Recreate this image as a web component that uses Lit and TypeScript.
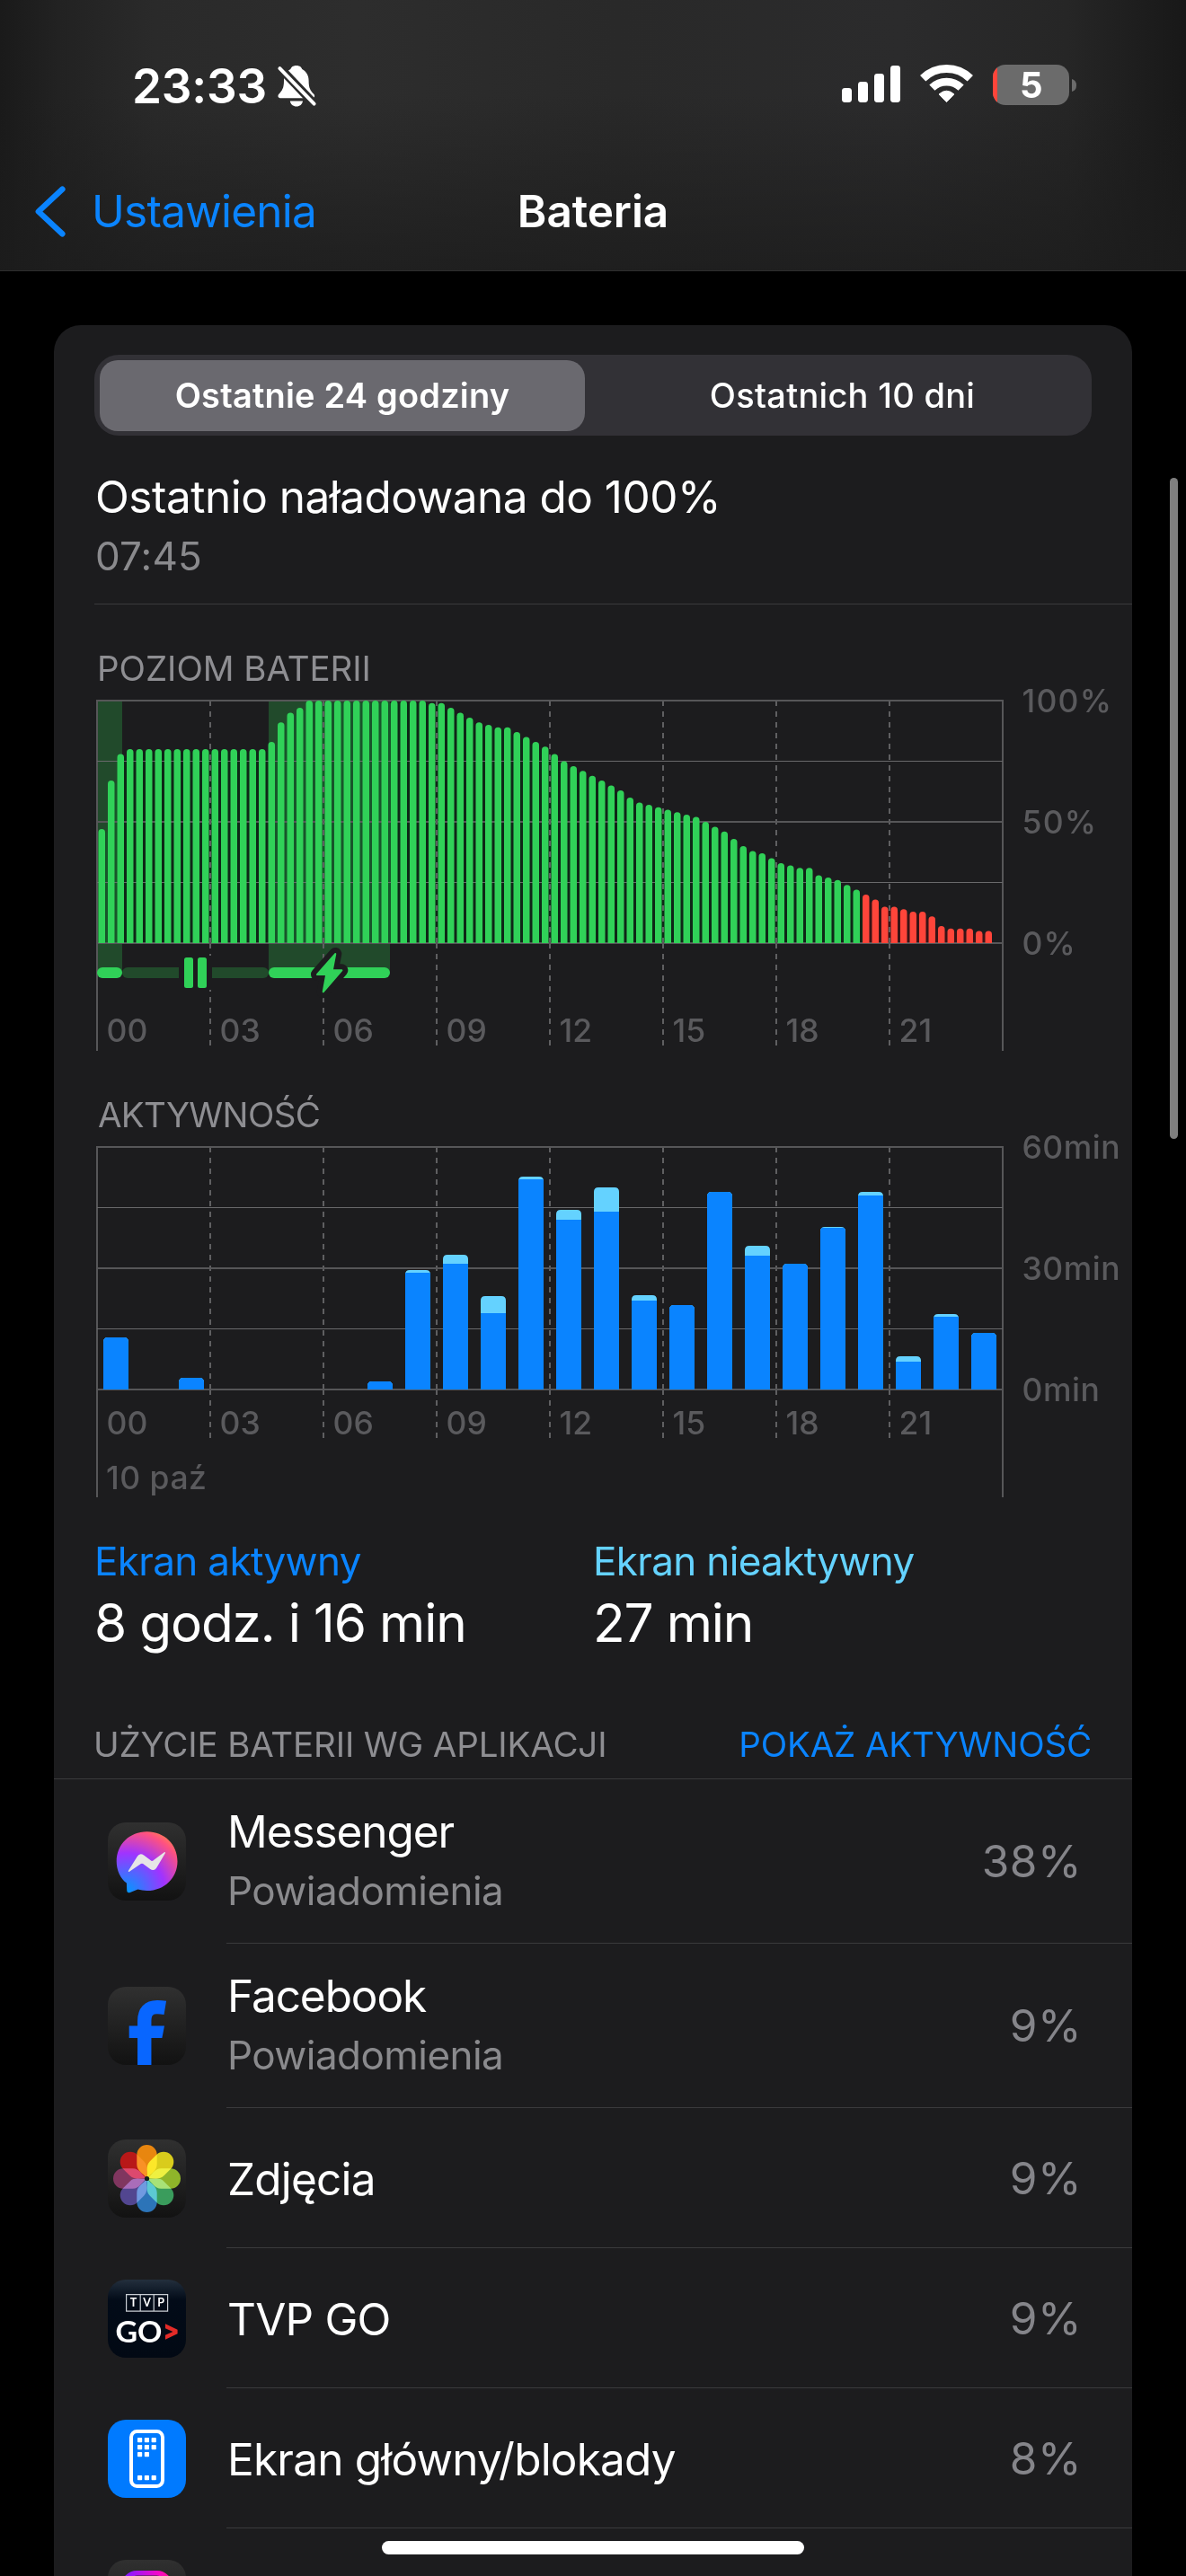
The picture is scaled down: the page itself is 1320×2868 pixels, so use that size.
import { LitElement, html, svg, css, nothing } from "lit";
import { customElement, property } from "lit/decorators.js";

const INK = css`
  :host { font-family: Inter, "Liberation Sans", sans-serif; color: #fff; }
  svg { display: block; overflow: visible; }
`;

/* ---------- data ---------- */

// Battery charge in percent, one sample every 15 minutes from 00:00.
const LEVELS: number[] = [
  47, 67, 78, ...Array(15).fill(80), 83, 91, 95, 97, ...Array(13).fill(100),
  99, 99, 97, 95, 93, 91, 90, 89, 89, 87, 85, 83, 81, 78, 75, 73, 71, 69, 67,
  65, 63, 60, 58, 57, 56, 55, 54, 53, 52, 50, 48, 46, 43, 40, 38, 37, 35, 33,
  32, 31, 31, 28, 27, 26, 24, 22, 20, 18, 15, 15, 14, 13, 13, 11, 7, 6, 6, 6, 5, 5,
];
const FIRST_LOW = 81;
const CHARGING: [number, number][] = [[108, 136], [299, 434]];

// [hour, total height, screen-on height] in chart units (270 = 60 min).
const ACTIVITY: [number, number, number][] = [
  [0, 58, 58], [2, 13, 13], [7, 9, 9], [8, 133, 130], [9, 150, 140],
  [10, 104, 85], [11, 237, 234], [12, 200, 189], [13, 225, 198],
  [14, 105, 99], [15, 94, 94], [16, 220, 220], [17, 160, 149],
  [18, 140, 140], [19, 181, 180], [20, 220, 216], [21, 37, 31],
  [22, 84, 81], [23, 63, 63],
];

const HOURS = ["00", "03", "06", "09", "12", "15", "18", "21"];

interface AppUsage { icon: string; name: string; note?: string; share: string; }
const APPS: AppUsage[] = [
  { icon: "messenger", name: "Messenger", note: "Powiadomienia", share: "38%" },
  { icon: "facebook", name: "Facebook", note: "Powiadomienia", share: "9%" },
  { icon: "photos", name: "Zdjęcia", share: "9%" },
  { icon: "tvp", name: "TVP GO", share: "9%" },
  { icon: "home", name: "Ekran główny/blokady", share: "8%" },
  { icon: "instagram", name: "", share: "" },
];

/* ---------- status bar ---------- */

@customElement("status-bar")
class StatusBar extends LitElement {
  static styles = [INK, css`
    :host { display: flex; align-items: center; height: 192px; padding: 0 122px 0 147px; box-sizing: border-box; }
    .time { font-size: 53px; font-weight: 600; letter-spacing: -0.22px; line-height: 64px; width: 162px; }
    .icons { display: flex; gap: 23px; margin-left: auto; }
    .count { font: 700 40px Inter, sans-serif; }
  `];
  render() {
    return html`
      <span class="time">23:33</span>
      <svg width="43" height="46" viewBox="0 0 43 46" fill="#fff">
        <mask id="cut"><rect width="43" height="46" fill="#fff"/><path d="M-2 -2.2L45 47.2" stroke="#000" stroke-width="9.5"/></mask>
        <g mask="url(#cut)">
          <path d="M20.8 0C25 0 26.7 2.3 27.2 4C32 6.5 34.6 11 34.6 17C34.6 25 36.5 27.8 40 31.5C42.2 33.8 41 36.3 38 36.3H3.5C.6 36.3 -.6 33.8 1.6 31.5C5 27.8 7 25 7 17C7 11 9.6 6.5 14.4 4C14.9 2.3 16.6 0 20.8 0Z"/>
          <path d="M13.8 39.6H28C27.4 43.3 24.6 45.6 20.9 45.6S14.4 43.3 13.8 39.6Z"/>
        </g>
        <path d="M2.4 3.2L40.6 42.6" stroke="#fff" stroke-width="4" stroke-linecap="round"/>
      </svg>
      <div class="icons">
        <svg width="65" height="46" viewBox="0 0 65 46" fill="#fff">
          <rect y="26" width="11" height="16" rx="3.4"/><rect x="18" y="19" width="11" height="23" rx="3.4"/>
          <rect x="36" y="10" width="11" height="32" rx="3.4"/><rect x="54" y="1" width="11" height="41" rx="3.4"/>
        </svg>
        <svg width="57" height="46" viewBox="0 0 57 46" fill="none" stroke="#fff">
          <path d="M2.2 15.3A37.5 37.5 0 0 1 54.8 15.3" stroke-width="9"/>
          <path d="M12.4 25.6A23 23 0 0 1 44.6 25.6" stroke-width="8.8"/>
          <path d="M20 33Q28.5 25.4 37 33L28.5 41.6Z" fill="#fff" stroke-width="1" stroke-linejoin="round"/>
        </svg>
        <svg width="93" height="48" viewBox="0 0 93 48">
          <clipPath id="cell"><rect width="85" height="45" rx="14"/></clipPath>
          <g clip-path="url(#cell)"><rect width="85" height="45" fill="#6b6b6b"/><rect width="5" height="45" fill="#ff453a"/></g>
          <path d="M88 16Q93 17.5 93 23T88 30Z" fill="#6b6b6b"/>
          <text class="count" x="42.8" y="37.4" text-anchor="middle" fill="#fff">5</text>
        </svg>
      </div>`;
  }
}

/* ---------- charts ---------- */

const BASE1 = 1050;
const BASE2 = 1547;

const CHART = css`
  .tick { font: 500 35.5px Inter, sans-serif; fill: #5a5a5d; }
  .pct { letter-spacing: 1.2px; }
  .min { letter-spacing: 0.5px; }
  .major { stroke: #565658; stroke-width: 2; fill: none; }
  .minor { stroke: #69696b; stroke-width: 1; fill: none; }
  .dash { stroke: #5f5f61; stroke-width: 2; stroke-dasharray: 6 6; fill: none; }
`;

const grid = (top: number, dashEnd: number, axisEnd: number) => {
  const base = top + 270;
  const cols = [1, 2, 3, 4, 5, 6, 7].map((i) => 108 + i * 126);
  return svg`
    ${cols.map((x) => svg`<path class="dash" d="M${x} ${top}V${base - 1}M${x} ${base}V${dashEnd}"/>`)}
    <path class="major" d="M107 ${top}H1117M107 ${top + 135}H1117M107 ${base}H1117M108 ${top}V${axisEnd}M1116 ${top}V${axisEnd}"/>
    <path class="minor" d="M108 ${top + 67.5}H1116M108 ${top + 202.5}H1116"/>`;
};

@customElement("level-chart")
class LevelChart extends LitElement {
  static styles = [INK, CHART, css`:host { display: block; }`];

  private gap(i: number) {
    const next = LEVELS[i + 1];
    if (next === undefined) return nothing;
    const x = 108 + i * 10.5 + 9;
    const h = Math.min(LEVELS[i], next) * 2.7;
    const charging = CHARGING.some(([a, b]) => x >= a - 1 && x < b);
    const fill = i >= FIRST_LOW ? "#3b1315" : charging ? "#17552a" : "#0e2717";
    return svg`<rect x=${x} y=${BASE1 - h + 3} width="3" height=${h - 3} fill=${fill} />`;
  }

  private bar(level: number, i: number) {
    const x = 108 + i * 10.5 + 1.5;
    const top = BASE1 - level * 2.7;
    return svg`<path d="M${x} ${BASE1}V${top + 3.75}a3.75 3.75 0 0 1 7.5 0V${BASE1}Z" fill=${i >= FIRST_LOW ? "#ff453a" : "#30d158"} />`;
  }

  render() {
    return html`<svg width="1200" height="405" viewBox="60 767 1200 405">
      ${CHARGING.map(([a, b]) => svg`<rect x=${a} y="780" width=${b - a} height="303" fill="#214a2b"/>`)}
      ${LEVELS.map((_, i) => this.gap(i))}
      ${grid(780, 1164, 1170)}
      ${LEVELS.map((l, i) => this.bar(l, i))}
      <rect x="108" y="1077" width="28" height="12" rx="6" fill="#30d158"/>
      <rect x="136" y="1077" width="163" height="12" rx="6" fill="#214a2b"/>
      <rect x="199" y="1064" width="37" height="38" fill="#1c1c1e"/>
      <rect x="205" y="1066" width="10" height="34" rx="2.5" fill="#30d158"/>
      <rect x="220" y="1066" width="10" height="34" rx="2.5" fill="#30d158"/>
      <rect x="299" y="1077" width="135" height="12" rx="6" fill="#30d158"/>
      <path d="M373.3 1062L353 1085H363.2L359.7 1104.3L380.4 1080.3H369.8Z" fill="#30d158" stroke="#1c1c1e" stroke-width="14" stroke-linejoin="round"/>
      <path d="M373.3 1062L353 1085H363.2L359.7 1104.3L380.4 1080.3H369.8Z" fill="#30d158" stroke="#30d158" stroke-width="2" stroke-linejoin="round"/>
      ${HOURS.map((h, i) => svg`<text class="tick" x=${118.5 + i * 126} y="1160">${h}</text>`)}
      <text class="tick pct" x="1137.5" y="793">100%</text>
      <text class="tick pct" x="1137.5" y="928">50%</text>
      <text class="tick pct" x="1137.5" y="1063">0%</text>
    </svg>`;
  }
}

@customElement("activity-chart")
class ActivityChart extends LitElement {
  static styles = [INK, CHART, css`:host { display: block; }`];

  private bar([hour, total, on]: [number, number, number]) {
    const x = 108 + hour * 42 + 7;
    const top = BASE2 - total;
    const shape = `M${x} ${BASE2}V${top + 5}q0 -5 5 -5h18q5 0 5 5V${BASE2}Z`;
    return svg`
      <clipPath id=${"h" + hour}><path d=${shape} /></clipPath>
      <g clip-path=${`url(#h${hour})`}>
        <rect x=${x} y=${top} width="28" height=${total} fill="#64d2ff" />
        <rect x=${x} y=${BASE2 - on} width="28" height=${on} fill="#0a84ff" />
      </g>`;
  }

  render() {
    return html`<svg width="1200" height="405" viewBox="60 1264 1200 405">
      ${grid(1277, 1601, 1667)}
      ${ACTIVITY.map((a) => this.bar(a))}
      ${HOURS.map((h, i) => svg`<text class="tick" x=${118.5 + i * 126} y="1597">${h}</text>`)}
      <text class="tick min" x="118" y="1658">10 paź</text>
      <text class="tick min" x="1137.5" y="1290">60min</text>
      <text class="tick min" x="1137.5" y="1425">30min</text>
      <text class="tick min" x="1137.5" y="1560">0min</text>
    </svg>`;
  }
}

/* ---------- app icons ---------- */

const PETALS: [number, string][] = [
  [0, "#e8860f"], [45, "#d9cc1c"], [90, "#8fb52a"], [135, "#3a9c5c"],
  [180, "#2c74b8"], [225, "#524690"], [270, "#80365f"], [315, "#b81818"],
];
const DOTS = [[33, 20], [40.8, 20], [48.6, 20], [33, 28], [40.8, 28], [48.6, 28], [33, 36], [40.8, 36], [33, 62], [40.8, 62], [48.6, 62]];

@customElement("app-icon")
class AppIcon extends LitElement {
  static styles = [INK, css`
    :host { display: block; width: 87px; height: 87px; border-radius: 20px; overflow: hidden; flex: none;
      background: linear-gradient(#303030, #121212); }
    :host([name="tvp"]) { background: linear-gradient(#232f3d, #020b18 26%, #020914); }
    :host([name="home"]) { background: #007aff; }
    .petals { isolation: isolate; }
    .petal { mix-blend-mode: screen; }
    .tvp { font: 700 12.5px Lato, sans-serif; }
    .go { font: 700 33px Lato, sans-serif; }
  `];
  @property({ reflect: true }) name = "";

  private art() {
    switch (this.name) {
      case "messenger": return svg`
        <radialGradient id="m" gradientUnits="userSpaceOnUse" cx="21" cy="77" r="74">
          <stop offset="0" stop-color="#0099ff"/><stop offset=".58" stop-color="#a033ff"/>
          <stop offset=".92" stop-color="#ff5280"/><stop offset="1" stop-color="#ff7061"/>
        </radialGradient>
        <path fill="url(#m)" d="M43.6 10.3C63 10.3 77.5 24.6 77.5 43.2S63 76 43.6 76C40 76 36.6 75.5 33.4 74.6L24.8 77.9C22.6 78.7 21.2 77.8 21.2 75.6L20.9 67.6C13.9 62 9.7 53.3 9.7 43.2C9.7 24.6 24.2 10.3 43.6 10.3Z"/>
        <path fill="#e6e6e6" stroke="#e6e6e6" stroke-width="1.6" stroke-linejoin="round" d="M23.6 54.2L33.4 38.4Q35.8 34.6 39.6 37.2L47.6 43.2Q49.2 44.2 50.8 43.2L63.2 33.8L53.6 50Q51.2 53.8 47.4 51.2L39.6 45.4Q38 44.4 36.4 45.4Z"/>`;
      case "facebook": return svg`
        <path d="M40.75 87V38Q40.75 22.6 55 22.6Q59 22.6 63.8 23.4" fill="none" stroke="#0866ff" stroke-width="15.4"/>
        <path d="M23.7 43.4H63L60.4 57H23.7Z" fill="#0866ff"/>`;
      case "photos": return svg`
        <g class="petals" transform="translate(43.5 43.5)">
          ${PETALS.map(([a, c]) => svg`<path class="petal" transform=${`rotate(${a})`} fill=${c} d="M0 0C-4 -6 -11.2 -8 -11.2 -16V-26.3A11.2 11.2 0 0 1 11.2 -26.3V-16C11.2 -8 4 -6 0 0Z"/>`)}
        </g>
        <circle cx="43.5" cy="43.5" r="2.6" fill="#14201f"/>`;
      case "tvp": return svg`
        <path d="M20.6 16.6H66.6V35.2H20.6ZM36.2 16.6V35.2M51.2 16.6V35.2" fill="none" stroke="#c9ced4" stroke-width="1.2"/>
        <g class="tvp" fill="#fff" text-anchor="middle">
          <text x="28.6" y="30.4">T</text><text x="43.6" y="30.4">V</text><text x="59" y="30.4">P</text>
        </g>
        <text class="go" x="8.4" y="70" textLength="52" lengthAdjust="spacingAndGlyphs" fill="#fff">GO</text>
        <path d="M64 49.2L77.6 55.8V60.2L64 66.8V61.8L72.4 58L64 54.2Z" fill="#e32b28"/>`;
      case "home": return svg`
        <rect x="26" y="13" width="35" height="61" rx="6.5" fill="none" stroke="#fff" stroke-width="4"/>
        ${DOTS.map(([x, y]) => svg`<rect x=${x} y=${y} width="5.2" height="5.2" rx=".8" fill="#fff" />`)}`;
      default: return svg`
        <linearGradient id="i" x1="0" y1="0" x2="1" y2="0"><stop offset=".1" stop-color="#8a17ff"/><stop offset=".75" stop-color="#f408c8"/><stop offset="1" stop-color="#ff1494"/></linearGradient>
        <rect x="17.5" y="14.8" width="52" height="52" rx="15" fill="none" stroke="url(#i)" stroke-width="5.6"/>`;
    }
  }
  render() { return html`<svg width="87" height="87" viewBox="0 0 87 87">${this.art()}</svg>`; }
}

/* ---------- page ---------- */

@customElement("app-root")
class AppRoot extends LitElement {
  static styles = [INK, css`
    :host { display: block; position: relative; width: 1320px; height: 2868px; overflow: hidden; background: #000; }
    .top {
      height: 302px; box-sizing: border-box; border-bottom: 1px solid #2e2e2e;
      background:
        linear-gradient(180deg, rgba(28,28,28,0) 35%, rgba(28,28,28,.8) 100%),
        linear-gradient(90deg, #1a1a1a 0, #222 5%, #2a2a2a 13%, #2d2d2d 30%, #292929 52%, #2b2b2c 76%, #262626 90%, #181818 100%);
    }
    .nav { display: grid; grid-template-columns: 1fr auto 1fr; align-items: center; height: 86px; font-size: 49.5px; line-height: 60px; }
    .back { display: flex; align-items: center; gap: 29px; padding-left: 39px; color: #0a84ff; letter-spacing: -0.75px; }
    .title { font-weight: 600; letter-spacing: -0.07px; }

    .card { margin: 60px 60px 0; background: #1c1c1e; border-radius: 30px 30px 0 0; height: 2600px; overflow: hidden; }
    .tabs {
      display: grid; grid-template-columns: 540px 1fr; gap: 9px; height: 90px; margin: 33px 45px 0; padding: 6px 0 6px 6px;
      box-sizing: border-box; border-radius: 27px; background: #323136; font-size: 38px; line-height: 79px; text-align: center;
    }
    .tab { font-weight: 500; letter-spacing: 0.28px; }
    .on { font-weight: 600; letter-spacing: 0.18px; background: #6a696f; border-radius: 20px; }

    .charged { margin: 38px 0 0 45px; padding: 0 0 27px 1px; border-bottom: 1px solid #3a3a3c; }
    .headline { font-size: 49.5px; line-height: 60px; letter-spacing: -0.5px; }
    .moment { margin-top: 10px; font-size: 44px; line-height: 52px; letter-spacing: 0.15px; color: #8a8a8d; }

    .caption { font-size: 38.5px; line-height: 46px; color: #8e8e92; margin: 48px 0 0 48px; letter-spacing: -0.05px; }
    .tight { margin: 46px 0 0 49px; letter-spacing: -0.7px; }

    .legend { display: grid; grid-template-columns: 1fr 1fr; margin: 43px 45px 0; }
    .kind { font-size: 44px; line-height: 52px; letter-spacing: -0.65px; color: #0a84ff; }
    .idle { color: #64d2ff; }
    .sum { margin-top: 8px; font-size: 58.5px; line-height: 70px; letter-spacing: -1.16px; }

    .usage { display: flex; justify-content: space-between; margin-top: 77px; padding: 0 45px 15px 44px; border-bottom: 1px solid #3a3a3c;
      font-size: 38.5px; line-height: 46px; letter-spacing: -0.14px; color: #8e8e92; }
    .link { color: #0a84ff; }

    .row { display: flex; align-items: center; gap: 45px; height: 156px; padding-left: 60px; }
    .tall { height: 183px; }
    .body { flex: 1; align-self: stretch; display: flex; align-items: center; justify-content: space-between; padding-right: 56px; border-bottom: 1px solid #3a3a3c; }
    .names { padding: 3px 0 0 1px; }
    .tall .names { padding: 0 0 4px 1px; }
    .name { font-size: 49.5px; line-height: 60px; letter-spacing: -0.8px; }
    .tall .name { letter-spacing: -1.08px; }
    .note { margin-top: 10px; font-size: 44px; line-height: 52px; letter-spacing: -0.55px; color: #8a8a8d; }
    .share { font-size: 49.5px; line-height: 60px; letter-spacing: 0.5px; color: #85858a; }

    .scroll { position: absolute; left: 1302px; top: 532px; width: 9px; height: 736px; border-radius: 5px; background: #7f7f7f; }
    .grip { position: absolute; left: 425px; top: 2829px; width: 470px; height: 15px; border-radius: 8px; background: #fff; }
  `];

  private row(a: AppUsage) {
    return html`<div class="row ${a.note ? "tall" : ""}">
      <app-icon name=${a.icon}></app-icon>
      <div class="body">
        <div class="names">
          <div class="name">${a.name}</div>
          ${a.note ? html`<div class="note">${a.note}</div>` : nothing}
        </div>
        <div class="share">${a.share}</div>
      </div>
    </div>`;
  }

  render() {
    return html`
      <header class="top">
        <status-bar></status-bar>
        <nav class="nav">
          <div class="back">
            <svg width="34" height="57" viewBox="0 0 34 57" fill="none" stroke="#0a84ff" stroke-width="6.4" stroke-linecap="round" stroke-linejoin="round"><path d="M30.4 3.6L3.8 28.5L30.4 53.4"/></svg>
            <span>Ustawienia</span>
          </div>
          <div class="title">Bateria</div>
          <span></span>
        </nav>
      </header>
      <main class="card">
        <div class="tabs"><div class="tab on">Ostatnie 24 godziny</div><div class="tab">Ostatnich 10 dni</div></div>
        <section class="charged">
          <div class="headline">Ostatnio naładowana do 100%</div>
          <div class="moment">07:45</div>
        </section>
        <div class="caption">POZIOM BATERII</div>
        <level-chart></level-chart>
        <div class="caption tight">AKTYWNOŚĆ</div>
        <activity-chart></activity-chart>
        <section class="legend">
          <div><div class="kind">Ekran aktywny</div><div class="sum">8 godz. i 16 min</div></div>
          <div><div class="kind idle">Ekran nieaktywny</div><div class="sum">27 min</div></div>
        </section>
        <div class="usage"><span>UŻYCIE BATERII WG APLIKACJI</span><span class="link">POKAŻ AKTYWNOŚĆ</span></div>
        ${APPS.map((a) => this.row(a))}
      </main>
      <div class="scroll"></div>
      <div class="grip"></div>`;
  }
}
